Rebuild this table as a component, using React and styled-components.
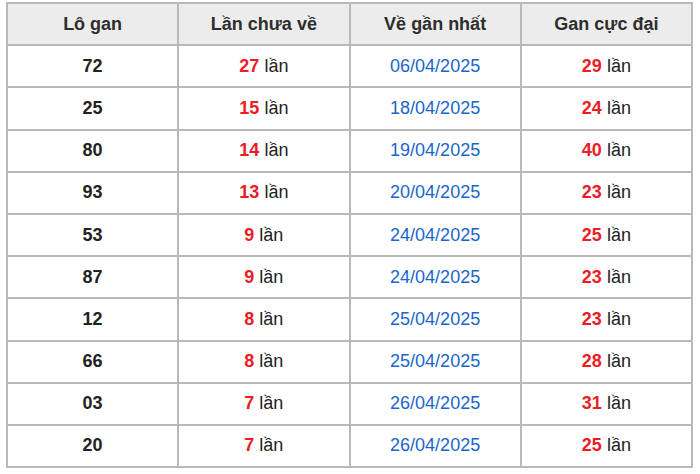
import React from 'react';
import styled, { createGlobalStyle } from 'styled-components';

const GlobalStyle = createGlobalStyle`
  body {
    margin: 0;
    background: #ffffff;
    font-family: "Liberation Sans", Arial, sans-serif;
  }
`;

const Wrap = styled.div`
  padding: 2px 0 0 6px;
`;

const Table = styled.table`
  width: 687px;
  border-collapse: collapse;
  table-layout: fixed;
  font-size: 18px;
`;

const Th = styled.th`
  height: 40.2px;
  padding: 0;
  border: 2px solid #b9b9b9;
  background: #ececec;
  color: #2e2e2e;
  font-weight: bold;
  text-align: center;
`;

const Td = styled.td`
  height: 40.2px;
  padding: 0;
  border: 2px solid #b9b9b9;
  text-align: center;
  color: #222;
  font-weight: ${(p) => (p.$bold ? 'bold' : 'normal')};
`;

const Num = styled.span`
  color: #ee1c25;
  font-weight: bold;
`;

const DateText = styled.span`
  color: #1a66cc;
`;

const rows = [
  ['72', 27, '06/04/2025', 29],
  ['25', 15, '18/04/2025', 24],
  ['80', 14, '19/04/2025', 40],
  ['93', 13, '20/04/2025', 23],
  ['53', 9, '24/04/2025', 25],
  ['87', 9, '24/04/2025', 23],
  ['12', 8, '25/04/2025', 23],
  ['66', 8, '25/04/2025', 28],
  ['03', 7, '26/04/2025', 31],
  ['20', 7, '26/04/2025', 25],
];

export default function App() {
  return (
    <Wrap>
      <GlobalStyle />
      <Table>
        <thead>
          <tr>
            <Th>Lô gan</Th>
            <Th>Lần chưa về</Th>
            <Th>Về gần nhất</Th>
            <Th>Gan cực đại</Th>
          </tr>
        </thead>
        <tbody>
          {rows.map((r, i) => (
            <tr key={i}>
              <Td $bold>{r[0]}</Td>
              <Td>
                <Num>{r[1]}</Num> lần
              </Td>
              <Td>
                <DateText>{r[2]}</DateText>
              </Td>
              <Td>
                <Num>{r[3]}</Num> lần
              </Td>
            </tr>
          ))}
        </tbody>
      </Table>
    </Wrap>
  );
}
